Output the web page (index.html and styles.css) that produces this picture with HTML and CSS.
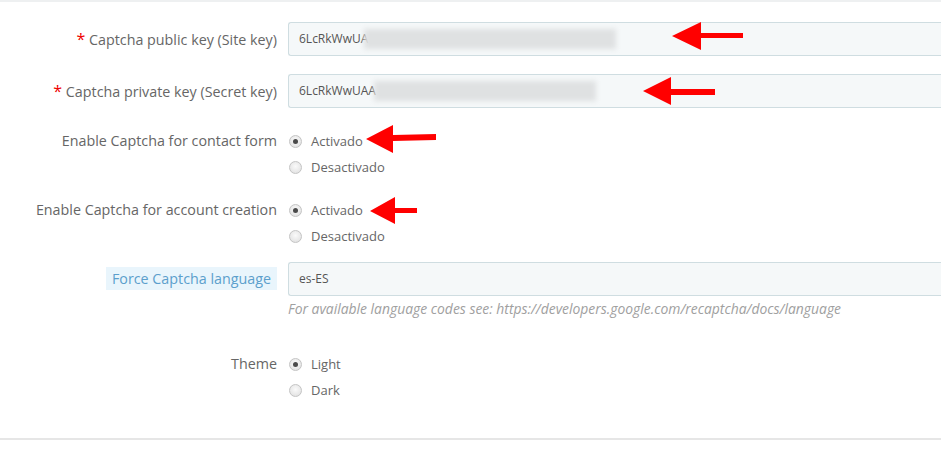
FILE: index.html
```html
<!DOCTYPE html>
<html>
<head>
<meta charset="utf-8">
<link rel="stylesheet" href="styles.css">
</head>
<body>
<div class="panel">
  <div class="form">
    <div class="row row-input">
      <div class="label"><span class="req">*</span> Captcha public key (Site key)</div>
      <div class="control">
        <div class="form-control"><span>6LcRkWwUA</span><span class="blur blur1"></span></div>
      </div>
    </div>
    <div class="row row-input">
      <div class="label"><span class="req">*</span> Captcha private key (Secret key)</div>
      <div class="control">
        <div class="form-control"><span>6LcRkWwUAA</span><span class="blur blur2"></span></div>
      </div>
    </div>
    <div class="row row-radio first-radio">
      <div class="label">Enable Captcha for contact form</div>
      <div class="control radios">
        <div class="radio"><span class="dot checked"></span>Activado</div>
        <div class="radio"><span class="dot"></span>Desactivado</div>
      </div>
    </div>
    <div class="row row-radio">
      <div class="label">Enable Captcha for account creation</div>
      <div class="control radios">
        <div class="radio"><span class="dot checked"></span>Activado</div>
        <div class="radio"><span class="dot"></span>Desactivado</div>
      </div>
    </div>
    <div class="row row-lang">
      <div class="label"><span class="tip">Force Captcha language</span></div>
      <div class="control">
        <div class="form-control">es-ES</div>
        <p class="help">For available language codes see: https://developers.google.com/recaptcha/docs/language</p>
      </div>
    </div>
    <div class="row row-radio theme">
      <div class="label">Theme</div>
      <div class="control radios">
        <div class="radio"><span class="dot checked"></span>Light</div>
        <div class="radio"><span class="dot"></span>Dark</div>
      </div>
    </div>
  </div>
</div>
<svg class="arrows" width="941" height="458" viewBox="0 0 941 458">
  <g fill="#f00">
    <polygon points="672,36 701,22 701,33 743,33 743,38 701,38 701,50"/>
    <polygon points="643,91 671,77 671,89 715,89 715,95 671,95 671,105"/>
    <polygon points="366,139 393,125 393,135 436,134 436,140 393,141 393,153"/>
    <polygon points="370,211 395,197 395,208 417,208 417,213 395,213 395,224"/>
  </g>
</svg>
</body>
</html>
```
FILE: styles.css
```css
html, body {
  margin: 0;
  padding: 0;
  background: #fff;
}
body {
  font-family: "Open Sans", "Liberation Sans", sans-serif;
  color: #666;
  width: 941px;
  height: 458px;
  overflow: hidden;
  position: relative;
}
.panel {
  border-top: 2px solid #eef0f1;
  border-bottom: 2px solid #e6e6e6;
  box-sizing: border-box;
  height: 440px;
}
.form {
  padding-top: 20px;
}
.row {
  display: flex;
  align-items: flex-start;
}
.label {
  width: 277px;
  flex: none;
  text-align: right;
  font-size: 14.3px;
  color: #666;
  box-sizing: border-box;
  white-space: nowrap;
}
.control {
  margin-left: 11px;
  flex: 1;
  min-width: 0;
}
.req {
  color: #e00;
  font-size: 16px;
}
.form-control {
  height: 34px;
  box-sizing: border-box;
  background: #f5f8f9;
  border: 1px solid #cfdde1;
  border-right: none;
  border-radius: 3px 0 0 3px;
  font-size: 12px;
  color: #555;
  line-height: 32px;
  padding-left: 10px;
  white-space: nowrap;
  display: flex;
  align-items: center;
}
.blur {
  display: inline-block;
  height: 20px;
  background: #dfe1e2;
  filter: blur(2.5px);
  margin-left: -4px;
}
.blur1 { width: 252px; }
.blur2 { width: 222px; margin-left: -2px; }
.row-input .label {
  line-height: 34px;
}
.row-input + .row-input {
  margin-top: 17px;
}
.row-radio .label {
  line-height: 26px;
}
.first-radio {
  margin-top: 19px;
}
.row-radio + .row-radio {
  margin-top: 17px;
}
.radios {
  display: flex;
  flex-direction: column;
}
.radio {
  height: 26px;
  line-height: 26px;
  font-size: 13px;
  color: #666;
  display: flex;
  align-items: center;
}
.dot {
  width: 13px;
  height: 13px;
  border-radius: 50%;
  box-sizing: border-box;
  border: 1px solid #c4c4c4;
  background: radial-gradient(circle at 50% 40%, #fafafa 0%, #e6e6e6 70%, #dadada 100%);
  margin-left: 1px;
  margin-right: 9px;
  position: relative;
  flex: none;
}
.dot.checked::after {
  content: "";
  position: absolute;
  left: 3px;
  top: 3px;
  width: 5px;
  height: 5px;
  border-radius: 50%;
  background: #4a4a4a;
}
.row-lang {
  margin-top: 13px;
}
.row-lang .label {
  line-height: 34px;
}
.tip {
  background: #e9f5fc;
  color: #5c9fcc;
  padding: 2px 6px;
}
.help {
  margin: 4px 0 0 0;
  font-size: 13.9px;
  font-style: italic;
  color: #a0a0a0;
  line-height: 18px;
}
.theme {
  margin-top: 33px;
}
.arrows {
  position: absolute;
  left: 0;
  top: 0;
  pointer-events: none;
}
```
